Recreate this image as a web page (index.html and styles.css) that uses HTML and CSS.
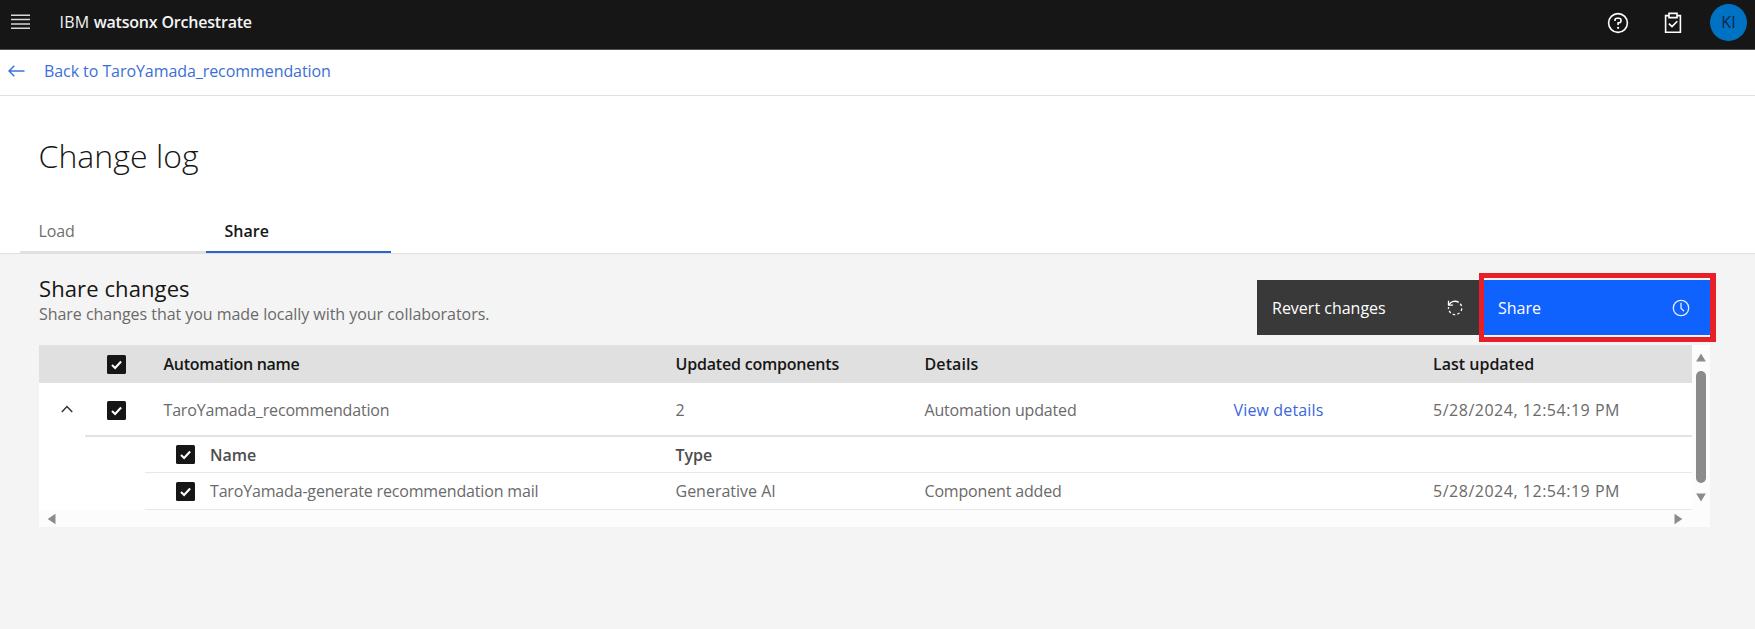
FILE: index.html
```html
<!DOCTYPE html>
<html lang="en">
<head>
<meta charset="utf-8">
<title>IBM watsonx Orchestrate</title>
<link rel="stylesheet" href="styles.css">
</head>
<body>
<svg class="sprite" aria-hidden="true">
  <symbol id="check" viewBox="0 0 19 19"><rect width="19" height="19" rx="1.5" fill="#161616"/><path d="M5 10l3.1 3 6-6.5" fill="none" stroke="#fff" stroke-width="2.1"/></symbol>
</svg>
<header class="header">
  <svg class="menu" viewBox="0 0 20 16"><path d="M0 1.2h19M0 5.5h19M0 9.9h19M0 14.2h19" stroke="#d8d8d8" stroke-width="1.5"/></svg>
  <div class="brand"><span class="brand-ibm">IBM </span><b class="brand-product">watsonx Orchestrate</b></div>
  <div class="header-tools">
    <svg class="help" viewBox="0 0 22 22" fill="none" stroke="#fff" stroke-width="1.6"><circle cx="11" cy="11" r="9.4"/><path d="M8 9V8.3Q8 6.3 10 6.3h2q2 0 2 2v.4q0 2-2 2h-.9v2.2"/><circle cx="11.1" cy="15.8" r="1.1" fill="#fff" stroke="none"/></svg>
    <svg class="clipboard" viewBox="0 0 18 22" fill="none" stroke="#fff" stroke-width="1.6"><path d="M5 3.6H1.6v16.6h14.8V3.6H13"/><path d="M5 1.4h8v4.2H5z"/><path d="M4.9 11.6l3.1 3 5.3-5.4"/></svg>
    <div class="avatar">KI</div>
  </div>
</header>
<nav class="back">
  <svg class="back-arrow" viewBox="0 0 17 12" fill="none" stroke="#3b74d8" stroke-width="1.5"><path d="M6.3.7L1 6l5.3 5.3M1 6h15.5"/></svg>
  <a class="back-link">Back to TaroYamada_recommendation</a>
</nav>
<h1 class="title">Change log</h1>
<div class="tabs">
  <div class="tab">Load</div>
  <div class="tab tab-active">Share</div>
</div>
<main class="content">
  <div class="toolbar">
    <div>
      <h2 class="section-title">Share changes</h2>
      <p class="subtitle">Share changes that you made locally with your collaborators.</p>
    </div>
    <div class="actions">
      <button class="btn btn-revert">Revert changes
        <svg class="icon-revert" viewBox="0 0 16 16" fill="none" stroke="#fff" stroke-width="1.3"><path d="M2 4.7C4.2 1.2 8.6.3 11.7 2.4"/><path d="M1.5.8v4.4h4.4"/><path d="M13.2 3.7q1 1.1 1.3 2.4M14.8 8.4q-.1 1.4-.8 2.5M12.5 12.9q-.9.9-2.2 1.3M8.2 14.7q-1.4 0-2.5-.6M3.7 12.9q-1-.9-1.5-2.1M1.5 8.8q-.1-.8.1-1.6"/></svg>
      </button>
      <button class="btn btn-share">Share
        <svg class="icon-clock" viewBox="0 0 18 18" fill="none" stroke="#e4edff" stroke-width="1.3"><circle cx="9" cy="9" r="7.7"/><path d="M9 3.8v5.4l3 3"/></svg>
      </button>
      <div class="highlight"></div>
    </div>
  </div>
  <div class="panel">
    <div class="table">
      <div class="row head">
        <span></span>
        <svg class="box"><use href="#check"/></svg>
        <span class="s-name">Automation name</span>
        <span class="s-updated">Updated components</span>
        <span class="s-details">Details</span>
        <span></span>
        <span>Last updated</span>
      </div>
      <div class="row item">
        <svg class="chevron" viewBox="0 0 12 8" fill="none" stroke="#333" stroke-width="1.5"><path d="M.8 7L6 1.6 11.2 7"/></svg>
        <svg class="box"><use href="#check"/></svg>
        <span class="s-text">TaroYamada_recommendation</span>
        <span>2</span>
        <span class="s-text">Automation updated</span>
        <a class="link">View details</a>
        <span class="date">5/28/2024, 12:54:19 PM</span>
      </div>
      <div class="nested">
        <div class="sub sub-head">
          <svg class="box"><use href="#check"/></svg>
          <span>Name</span>
          <span>Type</span>
        </div>
        <div class="sub">
          <svg class="box"><use href="#check"/></svg>
          <span class="s-text">TaroYamada-generate recommendation mail</span>
          <span>Generative AI</span>
          <span class="s-text">Component added</span>
          <span></span>
          <span class="date">5/28/2024, 12:54:19 PM</span>
        </div>
      </div>
      <div class="hscroll">
        <svg class="arrow-x" viewBox="0 0 9 12"><path d="M8.5 .8v10.4L.7 6z"/></svg>
        <svg class="arrow-x" viewBox="0 0 9 12"><path d="M.5 .8v10.4L8.3 6z"/></svg>
      </div>
    </div>
    <div class="vscroll">
      <svg class="arrow-y" viewBox="0 0 12 10"><path d="M.6 9.4h10.8L6 .6z"/></svg>
      <div class="thumb"></div>
      <svg class="arrow-y" viewBox="0 0 12 10"><path d="M.6 .6h10.8L6 9.4z"/></svg>
    </div>
  </div>
</main>
</body>
</html>
```
FILE: styles.css
```css
* { box-sizing: border-box; }
body {
  margin: 0;
  min-height: 100vh;
  display: flex;
  flex-direction: column;
  background: #fff;
  color: #161616;
  font: 16px/20px "Open Sans", "Noto Sans", sans-serif;
}
h1, h2, p { margin: 0; }
.sprite { display: none; }
svg { display: block; flex: none; }

.header {
  display: flex;
  align-items: center;
  height: 50px;
  padding: 0 8px 4px 11px;
  border-bottom: 1px solid #525252;
  background: #161616;
  color: #f4f4f4;
}
.menu { width: 20px; height: 16px; margin-top: -2px; }
.brand { margin: -2px 0 0 28.5px; white-space: pre; }
.brand-ibm { letter-spacing: .2px; }
.brand-product { font-weight: 600; letter-spacing: -.2px; }
.header-tools { display: flex; align-items: center; margin-left: auto; }
.help { width: 22px; height: 22px; margin-right: 35px; }
.clipboard { width: 18px; height: 22px; margin-right: 28px; }
.avatar {
  width: 37px;
  height: 37px;
  border-radius: 50%;
  background: #0072c3;
  color: #0b2744;
  line-height: 36px;
  text-align: center;
}

.back {
  display: flex;
  align-items: center;
  height: 46px;
  padding: 0 0 3px 8px;
  border-bottom: 1px solid #e0e0e0;
}
.back-arrow { width: 17px; height: 12px; margin-top: -1px; }
.back-link { margin-left: 19px; color: #3b6fd6; letter-spacing: -.07px; }

.title {
  padding: 40px 0 0 38.5px;
  font-size: 32px;
  line-height: 40px;
  font-weight: 340;
  letter-spacing: .05px;
}
.tabs {
  display: flex;
  height: 78px;
  padding: 33px 0 0 20px;
  border-bottom: 1px solid #e0e0e0;
}
.tab {
  width: 186px;
  height: 44px;
  padding: 12px 0 0 18.5px;
  border-bottom: 2px solid #e0e0e0;
  color: #6f6f6f;
  letter-spacing: -.1px;
}
.tab-active {
  width: 185px;
  border-bottom: 2px solid #2b64cf;
  color: #161616;
  font-weight: 600;
  letter-spacing: 0;
}

.content { flex: 1; padding: 19px 45px 0 39px; background: #f4f4f4; }
.toolbar { display: flex; justify-content: space-between; }
.section-title {
  padding-top: 2px;
  font-size: 22px;
  line-height: 26px;
  font-weight: 400;
  letter-spacing: .1px;
}
.subtitle { margin-top: 3px; color: #6a6a6a; letter-spacing: -.04px; }
.actions { position: relative; display: flex; padding-top: 7px; }
.btn {
  display: flex;
  align-items: center;
  justify-content: space-between;
  height: 55px;
  border: 0;
  padding: 0 16px 0 15px;
  color: #fff;
  font: inherit;
}
.btn-revert { width: 227px; padding-right: 21px; background: #393939; }
.btn-share { width: 226px; padding-left: 14px; padding-right: 20px; background: #0f62fe; }
.icon-revert { width: 16px; height: 16px; }
.icon-clock { width: 18px; height: 18px; }
.highlight {
  position: absolute;
  inset: 0 -6px -7px 222px;
  border: 5px solid #e81f27;
  border-right-width: 6px;
}

.panel { display: flex; height: 182px; margin-top: 10px; background: #fcfcfc; }
.table { width: 1653px; color: #6a6a6a; }
.row, .sub { display: grid; align-items: center; }
.row { grid-template-columns: 46px 78.5px 512px 249px 309px 199.5px 1fr; }
.head {
  height: 38px;
  background: #e0e0e0;
  color: #161616;
  font-weight: 600;
}
.item { height: 52px; padding-top: 2px; background: #fff; }
.box { width: 19px; height: 19px; }
.row .box { margin-left: 22px; }
.chevron { width: 12px; height: 8px; margin: -2px 0 0 21.5px; }
.link { color: #3b66dc; letter-spacing: .15px; }
.date { letter-spacing: .52px; }
.s-text { letter-spacing: -.17px; }
.s-name { letter-spacing: -.28px; }
.s-updated { letter-spacing: -.2px; }
.s-details { letter-spacing: .1px; }
.nested {
  height: 75px;
  padding-left: 60px;
  margin-left: 46px;
  border-top: 2px solid #e2e2e2;
  background: #fff;
  box-shadow: -46px 0 #fff;
}
.sub {
  height: 37px;
  padding-left: 31px;
  border-bottom: 1px solid #e8e8e8;
  grid-template-columns: 34px 465.5px 249px 309px 199.5px 1fr;
}
.sub-head { height: 36px; color: #4d4d4d; font-weight: 600; }
.hscroll {
  display: flex;
  justify-content: space-between;
  padding: 3px 9px 0 8px;
}
.arrow-x { width: 9px; height: 12px; fill: #8b8b8b; }
.vscroll {
  display: flex;
  flex-direction: column;
  align-items: center;
  width: 18px;
  padding-top: 8px;
}
.arrow-y { width: 12px; height: 9px; fill: #8b8b8b; }
.thumb {
  width: 10px;
  height: 112px;
  margin: 9px 0 10px;
  border-radius: 5px;
  background: #8b8b8b;
}
```
